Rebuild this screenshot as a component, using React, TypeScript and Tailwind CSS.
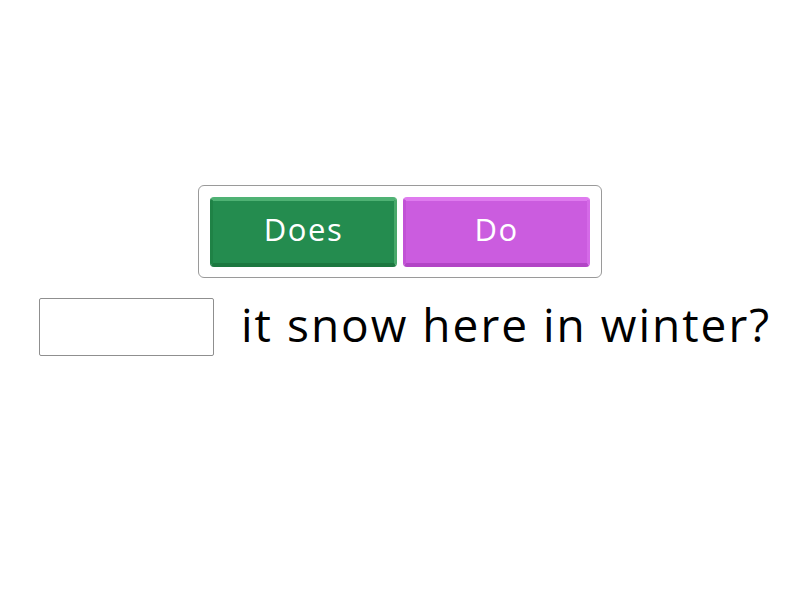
export default function App() {
  return (
    <div className="w-[800px] h-[600px] bg-white font-['Open_Sans',sans-serif] pt-[185px]">
      <div className="flex justify-center">
        <div className="flex gap-[6px] rounded-[6px] border border-[#9a9a9a] pt-[11px] pb-[10px] px-[11px]">
          <button className="w-[187px] h-[70px] rounded-[4px] bg-[#248c4f] border-t-[4px] border-t-[#4fb274] border-b-[4px] border-b-[#1c7840] border-l-[3px] border-l-[#1f8246] border-r-[3px] border-r-[#48a96a] text-white text-[31px] tracking-[1.5px] leading-none pb-[5px]">
            Does
          </button>
          <button className="w-[187px] h-[70px] rounded-[4px] bg-[#cb5cdf] border-t-[4px] border-t-[#df7bef] border-b-[4px] border-b-[#b245c6] border-l-[3px] border-l-[#c252d6] border-r-[3px] border-r-[#d56ae8] text-white text-[31px] tracking-[1.5px] leading-none pb-[5px]">
            Do
          </button>
        </div>
      </div>
      <div className="flex items-center mt-[20px] pl-[39px]">
        <div className="w-[175px] h-[58px] border border-[#8f8f8f] rounded-[2px] bg-white" />
        <p className="ml-[27px] text-[46px] tracking-[2px] leading-none text-black pb-[6px]">it snow here in winter?</p>
      </div>
    </div>
  )
}
